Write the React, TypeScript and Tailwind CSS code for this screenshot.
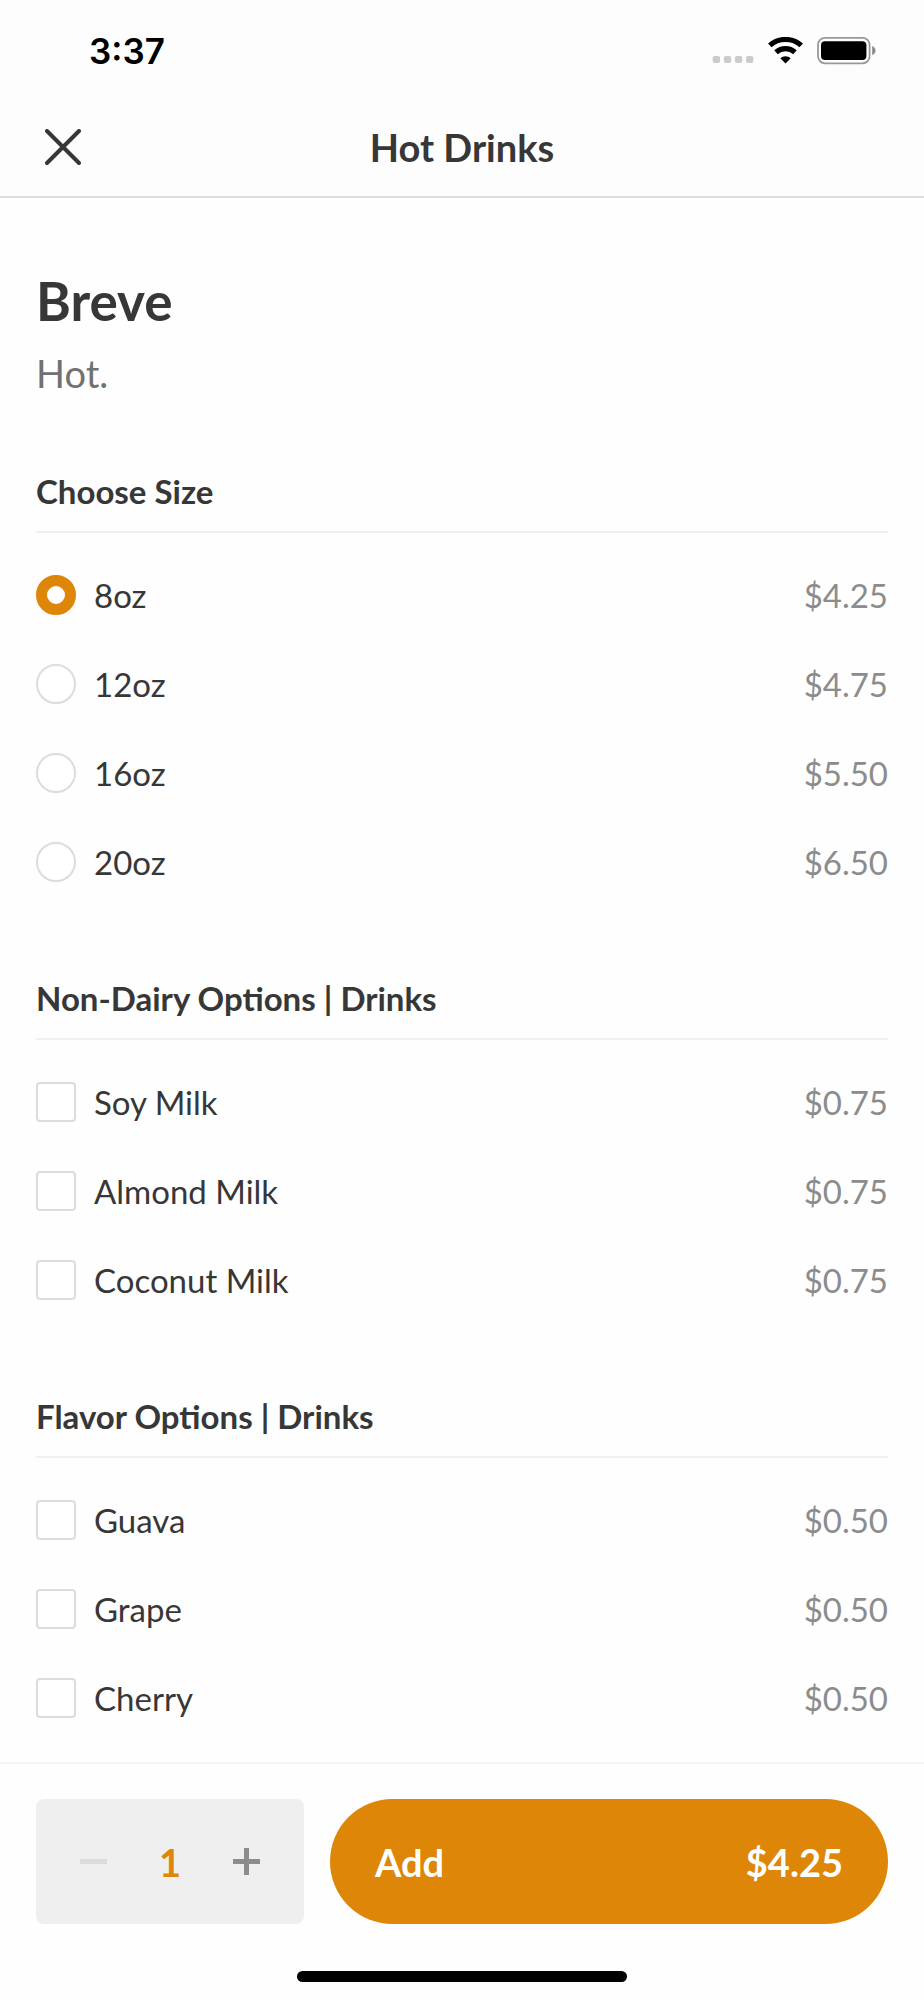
import { useState } from "react";

type Option = { label: string; price: string };

const sizes: Option[] = [
  { label: "8oz", price: "4.25" },
  { label: "12oz", price: "4.75" },
  { label: "16oz", price: "5.50" },
  { label: "20oz", price: "6.50" },
];

const addOnGroups: { title: string; options: Option[] }[] = [
  {
    title: "Non-Dairy Options | Drinks",
    options: [
      { label: "Soy Milk", price: "0.75" },
      { label: "Almond Milk", price: "0.75" },
      { label: "Coconut Milk", price: "0.75" },
    ],
  },
  {
    title: "Flavor Options | Drinks",
    options: [
      { label: "Guava", price: "0.50" },
      { label: "Grape", price: "0.50" },
      { label: "Cherry", price: "0.50" },
    ],
  },
];

function StatusBar() {
  return (
    <div className="flex h-[98px] items-center justify-between pt-1 pr-12 pl-[89px] text-black">
      <span className="font-['Inter',sans-serif] text-[35px] leading-none font-semibold">3:37</span>
      <div className="flex items-center gap-[14px]">
        <svg width="42" height="28" viewBox="0 0 42 28" fill="#cbcbcb" aria-hidden="true">
          <rect x="0.7" y="19" width="7.4" height="7" rx="2" />
          <rect x="11.8" y="19" width="7.4" height="7" rx="2" />
          <rect x="22.9" y="19" width="7.4" height="7" rx="2" />
          <rect x="34" y="19" width="7.4" height="7" rx="2" />
        </svg>
        <svg width="35" height="28" viewBox="0 0 35 28" aria-hidden="true">
          <g fill="none" stroke="#000" strokeWidth="5.2">
            <path d="M1.8 8.4C10.4 0.5 24.6 0.5 33.2 8.4" />
            <path d="M8 15.2C13.4 10.4 21.6 10.4 27 15.2" />
          </g>
          <path d="M12.3 21.2C15.2 18.5 19.8 18.5 22.7 21.2L17.5 26.4Z" fill="#000" />
        </svg>
        <svg width="59" height="28" viewBox="0 0 59 28" aria-hidden="true">
          <rect x="1" y="0.9" width="51.6" height="25.4" rx="7" fill="none" stroke="#999" strokeWidth="1.8" />
          <rect x="4" y="4.2" width="45.4" height="18.8" rx="4" fill="#000" />
          <path d="M55.2 9C59.6 10.6 59.6 16.6 55.2 18.2Z" fill="#8a8a8a" />
        </svg>
      </div>
    </div>
  );
}

function GroupTitle({ id, children }: { id: string; children: string }) {
  return (
    <h2 id={id} className="border-b-2 border-[#f0f0f0] pb-[18px] text-[33px] leading-[44px] font-bold">
      {children}
    </h2>
  );
}

function OptionRow({
  type,
  name,
  option,
  checked,
  onChange,
}: {
  type: "radio" | "checkbox";
  name: string;
  option: Option;
  checked: boolean;
  onChange: () => void;
}) {
  const shape =
    type === "radio"
      ? "rounded-full checked:border-[11px]"
      : "rounded checked:bg-[#dd8608]";
  return (
    <label className="flex h-10 cursor-pointer items-center gap-[18px] text-[33px] leading-10">
      <input
        type={type}
        name={name}
        checked={checked}
        onChange={onChange}
        className={`size-10 shrink-0 appearance-none border-2 border-[#dcdcdc] bg-white checked:border-[#dd8608] ${shape}`}
      />
      <span>{option.label}</span>
      <span className="ml-auto text-[#8c8c8c]">${option.price}</span>
    </label>
  );
}

export default function App() {
  const [size, setSize] = useState("8oz");
  const [extras, setExtras] = useState<string[]>([]);
  const [quantity, setQuantity] = useState(1);

  const toggle = (label: string) =>
    setExtras((list) => (list.includes(label) ? list.filter((l) => l !== label) : [...list, label]));

  const unit =
    Number(sizes.find((s) => s.label === size)!.price) +
    addOnGroups
      .flatMap((g) => g.options)
      .filter((o) => extras.includes(o.label))
      .reduce((sum, o) => sum + Number(o.price), 0);

  return (
    <div className="flex min-h-screen flex-col bg-[#fefefe] font-['Lato',sans-serif] text-[#373737]">
      <header className="border-b-2 border-[#dedede] bg-[#fdfdfd]">
        <StatusBar />
        <div className="grid h-[98px] grid-cols-[1fr_auto_1fr] items-center px-9">
          <button type="button" aria-label="Close" className="flex size-[53px] items-center justify-center">
            <svg width="36" height="36" viewBox="0 0 36 36" fill="none" stroke="#373737" strokeWidth="4" strokeLinecap="round">
              <path d="M2 2L34 34M34 2L2 34" />
            </svg>
          </button>
          <h1 className="text-[38px] leading-[46px] font-bold">Hot Drinks</h1>
        </div>
      </header>

      <main className="flex-1 px-9 pt-[71px] pb-10">
        <h2 className="text-[53px] leading-[64px] font-bold">Breve</h2>
        <p className="mt-4 text-[38px] leading-[48px] text-[#717171]">Hot.</p>

        <div className="mt-[72px] flex flex-col gap-[94px]">
          <section role="radiogroup" aria-labelledby="group-size">
            <GroupTitle id="group-size">Choose Size</GroupTitle>
            <div className="flex flex-col gap-[49px] pt-[42px]">
              {sizes.map((option) => (
                <OptionRow
                  key={option.label}
                  type="radio"
                  name="size"
                  option={option}
                  checked={size === option.label}
                  onChange={() => setSize(option.label)}
                />
              ))}
            </div>
          </section>

          {addOnGroups.map((group, i) => (
            <section key={group.title} role="group" aria-labelledby={`group-${i}`}>
              <GroupTitle id={`group-${i}`}>{group.title}</GroupTitle>
              <div className="flex flex-col gap-[49px] pt-[42px]">
                {group.options.map((option) => (
                  <OptionRow
                    key={option.label}
                    type="checkbox"
                    name={`group-${i}`}
                    option={option}
                    checked={extras.includes(option.label)}
                    onChange={() => toggle(option.label)}
                  />
                ))}
              </div>
            </section>
          ))}
        </div>
      </main>

      <footer className="sticky bottom-0 border-t-2 border-[#f6f6f6] bg-[#fefefe] px-9 pt-[35px] pb-[18px]">
        <div className="flex h-[125px] gap-[26px]">
          <div className="flex w-[268px] shrink-0 items-center justify-between rounded-lg bg-[#efefef] px-8">
            <button
              type="button"
              aria-label="Decrease quantity"
              disabled={quantity === 1}
              onClick={() => setQuantity((q) => q - 1)}
              className="flex size-[51px] items-center justify-center text-[#8c8c8c] disabled:text-[#dcdcdc]"
            >
              <svg width="27" height="27" viewBox="0 0 27 27" fill="currentColor">
                <path d="M0 11h27v5H0z" />
              </svg>
            </button>
            <output className="text-[38px] leading-[46px] font-bold text-[#dd8608]">{quantity}</output>
            <button
              type="button"
              aria-label="Increase quantity"
              onClick={() => setQuantity((q) => q + 1)}
              className="flex size-[51px] items-center justify-center text-[#8c8c8c]"
            >
              <svg width="27" height="27" viewBox="0 0 27 27" fill="currentColor">
                <path d="M0 11h11V0h5v11h11v5H16v11h-5V16H0z" />
              </svg>
            </button>
          </div>
          <button
            type="button"
            className="flex flex-1 items-center justify-between rounded-full bg-[#dd8608] px-[45px] text-[38px] leading-[46px] font-bold text-white"
          >
            <span>Add</span>
            <span>${(unit * quantity).toFixed(2)}</span>
          </button>
        </div>
        <div className="mx-auto mt-[47px] h-[11px] w-[330px] rounded-full bg-black" />
      </footer>
    </div>
  );
}
